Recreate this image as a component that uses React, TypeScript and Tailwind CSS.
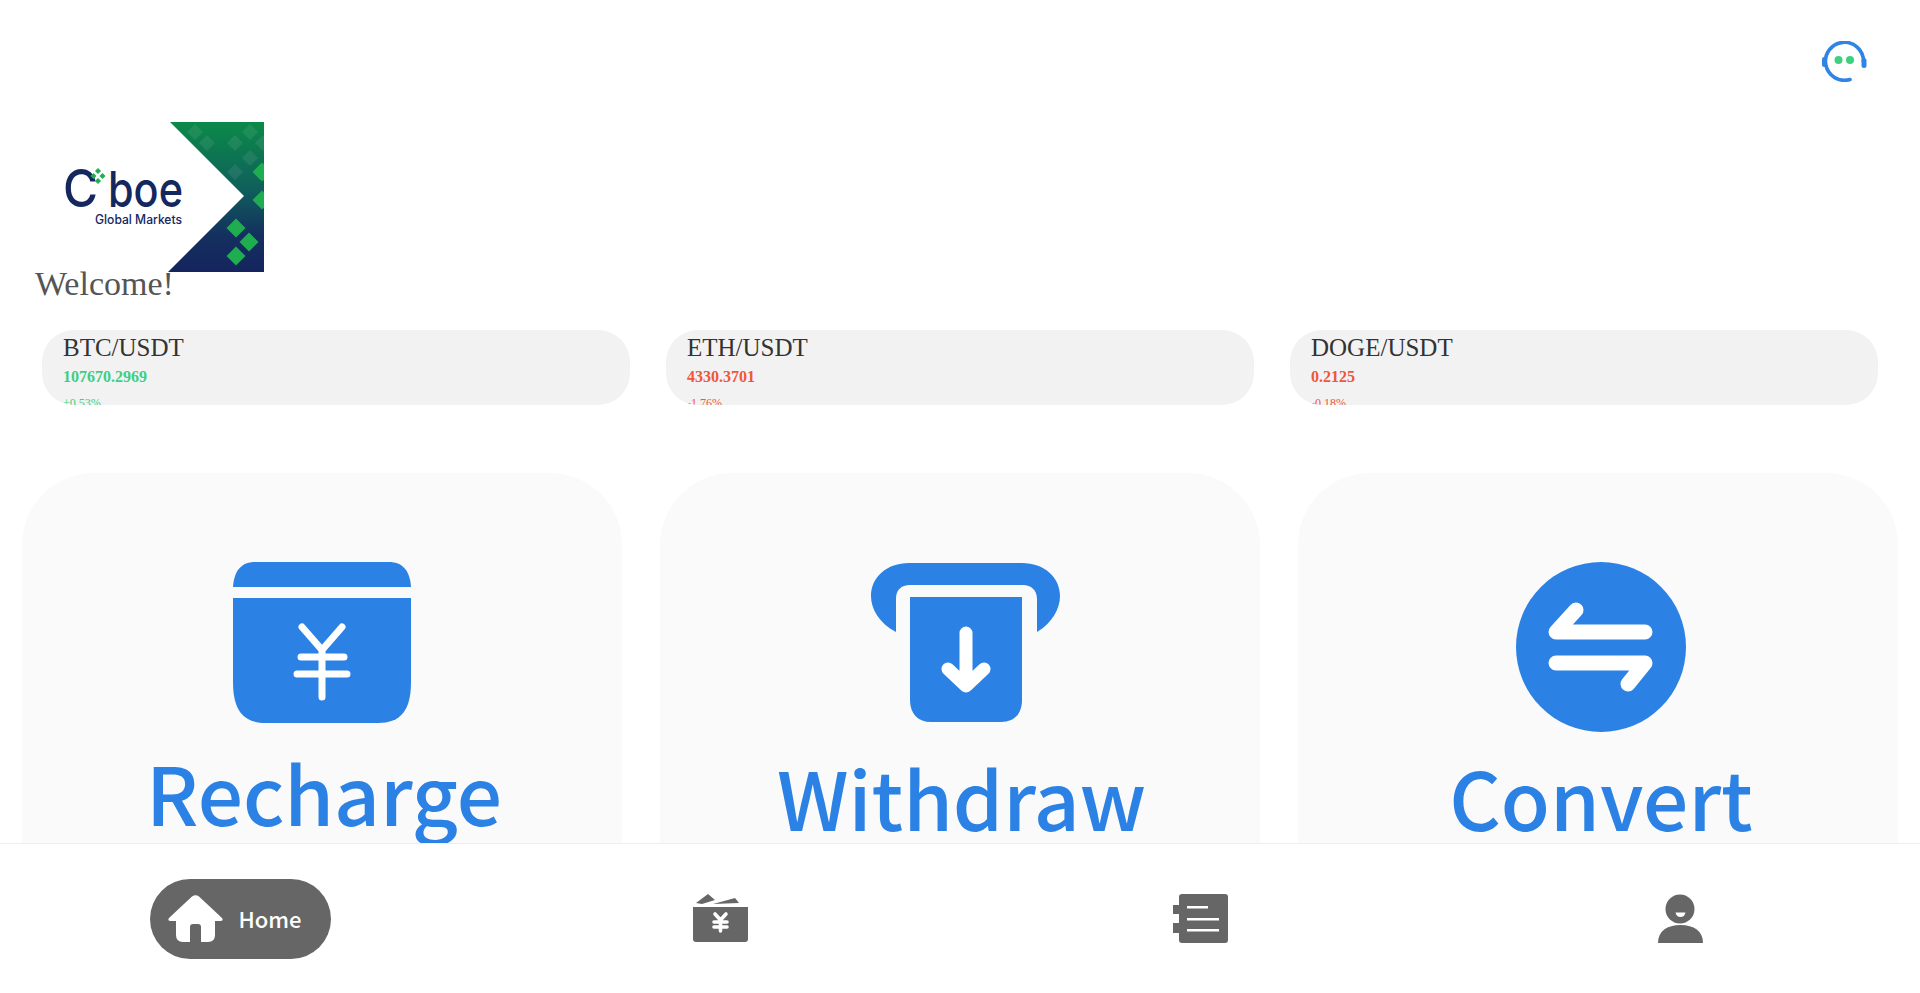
const BLUE = "#2b82e4";

const tickers = [
  { name: "BTC/USDT", price: "107670.2969", change: "+0.53%", up: true },
  { name: "ETH/USDT", price: "4330.3701", change: "-1.76%", up: false },
  { name: "DOGE/USDT", price: "0.2125", change: "-0.18%", up: false },
];

function SupportIcon() {
  return (
    <svg width="45" height="41" viewBox="0 0 45 41" fill="none">
      <path d="M41.5 20.5A19 19 0 1 0 28 38.5" stroke="#2f84e4" strokeWidth="3.6" strokeLinecap="round" />
      <rect x="0" y="16" width="4.5" height="10" rx="2.2" fill="#2f84e4" />
      <rect x="39.5" y="17" width="5" height="10" rx="2.5" fill="#2f84e4" />
      <circle cx="16.5" cy="19" r="4" fill="#3ecf7f" />
      <circle cx="28" cy="19" r="4" fill="#3ecf7f" />
    </svg>
  );
}

function Logo() {
  const faint = [
    [160, 10],
    [215, 10],
    [172, 21],
    [200, 21],
    [228, 21],
    [215, 36],
    [200, 50],
  ];
  const bright = [
    [227, 50],
    [227, 78],
    [201, 106],
    [214, 120],
    [201, 134],
  ];
  const diamond = (x: number, y: number, r: number) =>
    `${x},${y - r} ${x + r},${y} ${x},${y + r} ${x - r},${y}`;
  return (
    <svg width="229" height="150" viewBox="0 0 229 150" className="block">
      <defs>
        <linearGradient id="logoFade" x1="0" y1="0" x2="0" y2="1">
          <stop offset="0" stopColor="#0b8a48" />
          <stop offset="0.45" stopColor="#0f5f5c" />
          <stop offset="0.75" stopColor="#14305f" />
          <stop offset="1" stopColor="#15245e" />
        </linearGradient>
        <clipPath id="logoClip">
          <polygon points="135,0 229,0 229,150 133,150 209,74" />
        </clipPath>
      </defs>
      <g clipPath="url(#logoClip)">
        <rect width="229" height="150" fill="url(#logoFade)" />
        {faint.map(([x, y]) => (
          <polygon key={`${x}-${y}`} points={diamond(x, y, 8)} fill="#ffffff" opacity="0.08" />
        ))}
        {bright.map(([x, y]) => (
          <polygon key={`${x}-${y}`} points={diamond(x, y, 9.5)} fill="#1fae4f" />
        ))}
      </g>
      <g fill="#14275f" fontFamily="Inter, sans-serif" fontWeight="500">
        <text x="28" y="85" fontSize="52" textLength="35" lengthAdjust="spacingAndGlyphs">C</text>
        <text x="73" y="85" fontSize="50" textLength="75" lengthAdjust="spacingAndGlyphs">boe</text>
        <text x="60" y="102" fontSize="12.5" textLength="87" lengthAdjust="spacingAndGlyphs">Global Markets</text>
      </g>
      {[
        [63, 49],
        [58.5, 54],
        [67.5, 54],
        [63, 59],
      ].map(([x, y]) => (
        <polygon key={`${x}-${y}`} points={diamond(x, y, 3)} fill="#1fae4f" />
      ))}
    </svg>
  );
}

function RechargeIcon() {
  return (
    <svg width="178" height="161" viewBox="0 0 178 161" fill="none">
      <path d="M0 25C1 8 9 0 22 0H156C169 0 177 8 178 25Z" fill={BLUE} />
      <path d="M0 36H178V120C178 148 168 161 145 161H33C10 161 0 148 0 120Z" fill={BLUE} />
      <path
        d="M69 65L89 88L109 65M89 88V135M68 95H111M64 112H114"
        stroke="#ffffff"
        strokeWidth="7"
        strokeLinecap="round"
        strokeLinejoin="round"
      />
    </svg>
  );
}

function WithdrawIcon() {
  return (
    <svg width="189" height="160" viewBox="0 0 189 160" fill="none">
      <path
        d="M25 69C8 60 0 46 0 33C0 14 16 0 38 0H151C173 0 189 14 189 33C189 46 181 60 166 69V36C166 27 160 22 152 22H39C30 22 25 27 25 36Z"
        fill={BLUE}
      />
      <path d="M39 34H151V137C151 151 143 159 130 159H60C47 159 39 151 39 137Z" fill={BLUE} />
      <path
        d="M95 70V120M77 106L95 123L113 106"
        stroke="#ffffff"
        strokeWidth="13"
        strokeLinecap="round"
        strokeLinejoin="round"
      />
    </svg>
  );
}

function ConvertIcon() {
  return (
    <svg width="170" height="170" viewBox="0 0 170 170" fill="none">
      <circle cx="85" cy="85" r="85" fill={BLUE} />
      <path
        d="M129 70H40L60 48M40 101H129L112 122"
        stroke="#ffffff"
        strokeWidth="15"
        strokeLinecap="round"
        strokeLinejoin="round"
      />
    </svg>
  );
}

function HomeIcon() {
  return (
    <svg width="55" height="47" viewBox="0 0 55 47">
      <path
        d="M24 1.5Q27.5 -1 31 1.5L54 23Q56 26 52 26H47V40Q47 47 40 47H33V32Q33 29 30 29H25Q22 29 22 32V47H15Q8 47 8 40V26H3Q-1 26 1 23Z"
        fill="#ffffff"
      />
    </svg>
  );
}

function WalletIcon() {
  return (
    <svg width="56" height="49" viewBox="0 0 56 49">
      <path d="M3 9L15 0L22 6L9 10Z" fill="#666666" />
      <path d="M20 10L42 4L46 9Z" fill="#666666" />
      <path d="M0 13H55V45Q55 48 52 48H3Q0 48 0 45Z" fill="#666666" />
      <path
        d="M22 20L27.5 26L33 20M27.5 26V37M21 28H34M21 33H34"
        stroke="#ffffff"
        strokeWidth="3.6"
        fill="none"
        strokeLinecap="round"
      />
    </svg>
  );
}

function NotesIcon() {
  return (
    <svg width="55" height="49" viewBox="0 0 55 49">
      <rect x="6" y="0" width="49" height="49" rx="3" fill="#666666" />
      <rect x="0" y="11" width="8" height="9" fill="#666666" />
      <rect x="0" y="29" width="8" height="10" fill="#666666" />
      <rect x="14" y="12" width="21" height="2.5" fill="#ffffff" />
      <rect x="14" y="24" width="32" height="2.5" fill="#ffffff" />
      <rect x="14" y="35" width="32" height="2.5" fill="#ffffff" />
    </svg>
  );
}

function UserIcon() {
  return (
    <svg width="45" height="49" viewBox="0 0 45 49">
      <circle cx="22" cy="15" r="14.5" fill="#666666" />
      <path d="M17.5 18.5H27.5Q26.5 23 22.5 23Q18.5 23 17.5 18.5Z" fill="#ffffff" />
      <path d="M0 49C0 37 9 31 22.5 31C36 31 45 37 45 49Z" fill="#666666" />
    </svg>
  );
}

export default function App() {
  return (
    <div className="h-[993px] flex flex-col overflow-hidden bg-white font-['Liberation_Serif',serif]">
      <main className="flex-1 min-h-0 overflow-hidden">
        <header className="h-[122px] flex justify-end pt-[41px] pr-[53px]">
          <SupportIcon />
        </header>

        <div className="pl-[35px]">
          <Logo />
          <h1 className="-mt-[9px] relative text-[34px] leading-[41px] font-normal text-[#555555]">Welcome!</h1>
        </div>

        <section className="mt-[26px] px-[42px] grid grid-cols-3 gap-[36px]">
          {tickers.map((t) => (
            <div key={t.name} className="h-[75px] overflow-hidden rounded-[32px] bg-[#f2f2f2] pl-[21px] pt-[3px]">
              <div className="text-[25px] leading-[30px] text-[#333333]">{t.name}</div>
              <div className={`mt-[4px] text-[16px] leading-[20px] font-bold ${t.up ? "text-[#3ecf7f]" : "text-[#f0563a]"}`}>
                {t.price}
              </div>
              <div className={`mt-[9px] text-[12px] leading-[14px] ${t.up ? "text-[#3ecf7f]" : "text-[#f0563a]"}`}>
                {t.change}
              </div>
            </div>
          ))}
        </section>

        <section className="mt-[68px] px-[22px] grid grid-cols-3 gap-[38px] font-['Noto_Sans_CJK_SC',sans-serif] font-medium text-[#2b82e4] text-[80px] leading-[100px]">
          <div className="h-[500px] rounded-[72px] bg-[#fafafa] flex flex-col items-center pt-[89px]">
            <RechargeIcon />
            <div className="mt-[18px] ml-[4px]">Recharge</div>
          </div>
          <div className="h-[500px] rounded-[72px] bg-[#fafafa] flex flex-col items-center pt-[90px]">
            <div className="ml-[10px]">
              <WithdrawIcon />
            </div>
            <div className="mt-[23px] ml-[3px]">Withdraw</div>
          </div>
          <div className="h-[500px] rounded-[72px] bg-[#fafafa] flex flex-col items-center pt-[89px]">
            <div className="ml-[6px]">
              <ConvertIcon />
            </div>
            <div className="mt-[14px] ml-[6px]">Convert</div>
          </div>
        </section>
      </main>

      <footer className="h-[150px] shrink-0 border-t border-[#eeeeee] bg-white grid grid-cols-4 items-center">
        <div className="flex justify-center">
          <div className="w-[181px] h-[80px] rounded-full bg-[#666666] flex items-center pl-[18px] gap-[16px]">
            <HomeIcon />
            <span className="font-['Noto_Sans_CJK_SC',sans-serif] font-medium text-[22px] text-white">Home</span>
          </div>
        </div>
        <div className="flex justify-center pl-[2px]">
          <WalletIcon />
        </div>
        <div className="flex justify-center">
          <NotesIcon />
        </div>
        <div className="flex justify-center">
          <UserIcon />
        </div>
      </footer>
    </div>
  );
}
